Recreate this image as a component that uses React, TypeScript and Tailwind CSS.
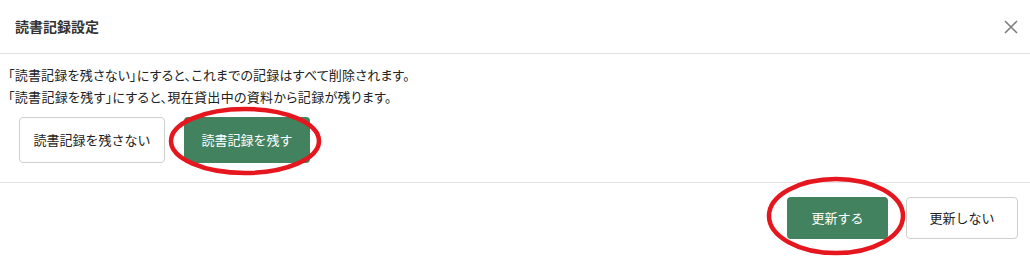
import React from "react";

export default function App() {
  const font = { fontFamily: '"Noto Sans CJK JP", "Noto Sans", sans-serif' };
  return (
    <div className="relative w-[1030px] h-[257px] bg-white text-[#222]" style={font}>
      <div className="flex h-[54px] items-center justify-between border-b border-[#e3e3e3] pl-[15px] pr-[11px]">
        <h1 className="text-[14px] font-bold text-[#333]">読書記録設定</h1>
        <button className="flex h-[16px] w-[16px] items-center justify-center" aria-label="close">
          <svg width="16" height="16" viewBox="0 0 16 16">
            <path d="M2 2 L14 14 M14 2 L2 14" stroke="#7d7d7d" strokeWidth="1.6" fill="none" />
          </svg>
        </button>
      </div>
      <div className="border-b border-[#e3e3e3] pl-[8px] pt-[10px] pb-[19px]">
        <p className="text-[13px] leading-[22px] tracking-[0.2px] [font-feature-settings:'palt']">
          「読書記録を残さない」にすると、これまでの記録はすべて削除されます。
        </p>
        <p className="text-[13px] leading-[22px] tracking-[0.3px] [font-feature-settings:'palt']">
          「読書記録を残す」にすると、現在貸出中の資料から記録が残ります。
        </p>
        <div className="mt-[9px] ml-[11px] flex gap-[19px]">
          <button className="h-[46px] w-[146px] rounded-[4px] border border-[#cfcfcf] bg-white text-[13px] text-[#222]">
            読書記録を残さない
          </button>
          <button className="h-[46px] w-[126px] rounded-[4px] bg-[#43825e] text-[13px] text-white">
            読書記録を残す
          </button>
        </div>
      </div>
      <div className="flex justify-end gap-[18px] pt-[14px] pr-[12px]">
        <button className="h-[42px] w-[101px] rounded-[4px] bg-[#43825e] text-[13px] text-white">
          更新する
        </button>
        <button className="h-[42px] w-[112px] rounded-[4px] border border-[#cfcfcf] bg-white text-[13px] text-[#222]">
          更新しない
        </button>
      </div>
      <svg className="pointer-events-none absolute left-0 top-0" width="1030" height="257">
        <ellipse cx="245" cy="141" rx="74" ry="32" fill="none" stroke="#e6161e" strokeWidth="4.5" />
        <ellipse cx="836" cy="216" rx="67" ry="37" fill="none" stroke="#e6161e" strokeWidth="4.5" />
      </svg>
    </div>
  );
}
